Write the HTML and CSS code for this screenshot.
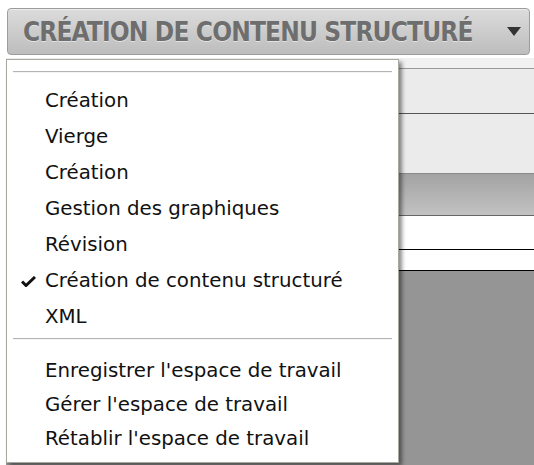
FILE: index.html
```html
<!DOCTYPE html>
<html lang="fr">
<head>
<meta charset="utf-8">
<title>Espace de travail</title>
<link rel="stylesheet" href="styles.css">
</head>
<body>
<div class="app">
  <div class="topbar">
    <div class="ws-button">
      <span class="ws-label">CRÉATION DE CONTENU STRUCTURÉ</span>
      <svg class="ws-arrow" width="14" height="9" viewBox="0 0 14 9"><path d="M0 0 H14 L7 9 Z" fill="#333"/></svg>
    </div>
  </div>
  <div class="panels">
    <div class="strip s1"></div>
    <div class="strip s2"></div>
    <div class="strip s3"></div>
    <div class="strip s4"></div>
    <div class="strip s5"></div>
    <div class="strip s6"></div>
    <div class="strip s7"></div>
  </div>
  <div class="menu">
    <div class="sep sep-top"></div>
    <ul class="group group-top">
      <li class="item">Création</li>
      <li class="item">Vierge</li>
      <li class="item">Création</li>
      <li class="item">Gestion des graphiques</li>
      <li class="item">Révision</li>
      <li class="item checked"><svg class="check" width="15" height="11" viewBox="0 0 15 11"><path d="M1 5.5 L5 9.5 L14 1" fill="none" stroke="#111" stroke-width="3"/></svg>Création de contenu structuré</li>
      <li class="item">XML</li>
    </ul>
    <div class="sep sep-mid"></div>
    <ul class="group group-bottom">
      <li class="item">Enregistrer l'espace de travail</li>
      <li class="item">Gérer l'espace de travail</li>
      <li class="item">Rétablir l'espace de travail</li>
    </ul>
  </div>
</div>
</body>
</html>
```
FILE: styles.css
```css
html, body {
  margin: 0;
  padding: 0;
  background: #ffffff;
}
.app {
  position: relative;
  width: 534px;
  height: 465px;
  overflow: hidden;
  display: flex;
  flex-direction: column;
}
.topbar {
  height: 58px;
  padding: 8px 4px 0 7px;
  box-sizing: border-box;
}
.ws-button {
  height: 47px;
  box-sizing: border-box;
  border: 1px solid #9c9c9c;
  border-radius: 4px;
  background: linear-gradient(#dcdcdc, #c9c9c9 60%, #bdbdbd);
  box-shadow: inset 0 1px 0 #ececec;
  display: flex;
  align-items: center;
  padding: 0 8px 0 15px;
}
.ws-label {
  flex: 1;
  font-family: "DejaVu Sans Condensed", "DejaVu Sans", sans-serif;
  font-stretch: condensed;
  font-weight: bold;
  font-size: 26px;
  color: #6e6e6e;
  letter-spacing: -0.85px;
  text-shadow: 0 1px 0 #e2e2e2;
  white-space: nowrap;
}
.ws-arrow {
  display: block;
}
.panels {
  flex: 1;
  margin-left: 6px;
  display: flex;
  flex-direction: column;
}
.strip { flex: none; }
.s1 { height: 10px; background: #f1f1f1; border-bottom: 1px solid #9a9a9a; }
.s2 { height: 44px; background: #ebebeb; border-bottom: 1px solid #555555; }
.s3 { height: 59px; background: #ebebeb; border-bottom: 1px solid #8a8a8a; }
.s4 { height: 41px; background: linear-gradient(#a3a3a3, #c2c2c2); border-bottom: 1px solid #666666; }
.s5 { height: 33px; background: #ffffff; border-bottom: 1px solid #000000; }
.s6 { height: 20px; background: #ffffff; border-bottom: 1px solid #000000; }
.s7 { flex: 1; background: #959595; }

.menu {
  position: absolute;
  left: 6px;
  top: 59px;
  width: 393px;
  height: 404px;
  box-sizing: border-box;
  background: #ffffff;
  border: 1px solid #a8a8a0;
  box-shadow: 3px 3px 4px rgba(0,0,0,0.45);
  padding-top: 11px;
  font-family: "DejaVu Sans", sans-serif;
  font-size: 19.8px;
  color: #111111;
}
.sep {
  height: 1px;
  background: #b4b4b4;
  border-bottom: 1px solid #f4f4f4;
  margin: 0 6px;
}
.group {
  list-style: none;
  margin: 0;
  padding: 0;
}
.group-top { margin-top: 10px; }
.sep-mid { margin-top: 3px; }
.group-bottom { margin-top: 14px; }
.item {
  position: relative;
  height: 36px;
  line-height: 36px;
  padding-left: 38px;
  white-space: nowrap;
}
.group-bottom .item { height: 34px; line-height: 34px; }
.check {
  position: absolute;
  left: 14px;
  top: 13px;
}
```
